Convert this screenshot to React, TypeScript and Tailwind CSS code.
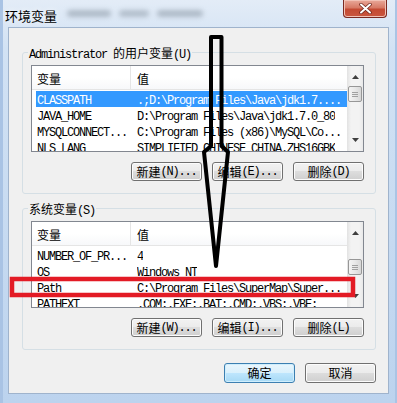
import React from 'react';

/** 一行环境变量 */
type Row = { name: string; value: string; selected?: boolean };

const userRows: Row[] = [
  { name: 'CLASSPATH', value: '.;D:\\Program Files\\Java\\jdk1.7....', selected: true },
  { name: 'JAVA_HOME', value: 'D:\\Program Files\\Java\\jdk1.7.0_80' },
  { name: 'MYSQLCONNECT...', value: 'C:\\Program Files (x86)\\MySQL\\Co...' },
  { name: 'NLS_LANG', value: 'SIMPLIFIED CHINESE_CHINA.ZHS16GBK' },
];

const sysRows: Row[] = [
  { name: 'NUMBER_OF_PR...', value: '4' },
  { name: 'OS', value: 'Windows NT' },
  { name: 'Path', value: 'C:\\Program Files\\SuperMap\\Super...' },
  { name: 'PATHEXT', value: '.COM;.EXE;.BAT;.CMD;.VBS;.VBE;' },
];

/** 宋体风格：ASCII 半角 6px，中文 12px */
function Txt({ s }: { s: string }) {
  const parts = s.split(/([^\x00-\x7f]+)/).filter(Boolean);
  return (
    <>
      {parts.map((p, i) =>
        /[^\x00-\x7f]/.test(p) ? (
          <span key={i} className="font-['Noto_Sans_CJK_SC',sans-serif] text-[12px] tracking-normal">
            {p}
          </span>
        ) : (
          <span key={i} className="font-['Liberation_Mono',monospace] text-[12px] tracking-[-1.2px]">
            {p}
          </span>
        ),
      )}
    </>
  );
}

function Tri({ up }: { up?: boolean }) {
  return (
    <svg width="7" height="4" viewBox="0 0 7 4">
      <polygon points={up ? '0,4 3.5,0 7,4' : '0,0 3.5,4 7,0'} fill="#3f3f3f" />
    </svg>
  );
}

function ScrollBar({ thumbGap }: { thumbGap: number }) {
  return (
    <div className="w-[16px] h-full flex flex-col bg-[linear-gradient(90deg,#e2e2e2,#f3f3f3_25%,#f3f3f3_75%,#e9e9e9)]">
      <div className="h-[19px] pt-[3px] flex items-center justify-center">
        <Tri up />
      </div>
      <div
        className="ml-[1px] w-[14px] h-[16px] rounded-[2px] border border-[#979797] bg-[linear-gradient(90deg,#f4f4f4,#e8e8e8_50%,#d7d7d7)] flex flex-col items-center justify-center gap-[1px]"
        style={{ marginTop: thumbGap }}
      >
        <div className="w-[6px] h-[1px] bg-[#a0a0a0]" />
        <div className="w-[6px] h-[1px] bg-[#a0a0a0]" />
        <div className="w-[6px] h-[1px] bg-[#a0a0a0]" />
      </div>
      <div className="flex-1" />
      <div className="h-[19px] pb-[3px] flex items-center justify-center">
        <Tri />
      </div>
    </div>
  );
}

function ListView({ rows, thumbGap }: { rows: Row[]; thumbGap: number }) {
  return (
    <div className="w-[333px] h-[87px] border border-[#828790] bg-white flex overflow-hidden">
      <div className="flex-1 flex flex-col overflow-hidden">
        <div className="h-[24px] shrink-0 flex border-b border-[#e5e5e5] bg-[linear-gradient(#ffffff,#ffffff_50%,#f7f8fa)] leading-[14px] text-black">
          <div className="w-[99px] pl-[5px] pt-[2px] flex items-center border-r border-[#e5e5e5]">
            <Txt s="变量" />
          </div>
          <div className="pl-[6px] pt-[2px] flex items-center">
            <Txt s="值" />
          </div>
        </div>
        <div className="pt-[1px]">
          {rows.map((r) => (
            <div
              key={r.name}
              className={
                r.selected
                  ? 'ml-[4px] pl-[1px] h-[16px] flex items-center whitespace-nowrap leading-[14px] bg-[#3399ff] text-white'
                  : 'ml-[4px] pl-[1px] h-[16px] flex items-center whitespace-nowrap leading-[14px] text-black'
              }
            >
              <div className="w-[100px] shrink-0 overflow-hidden">
                <Txt s={r.name} />
              </div>
              <div className="overflow-hidden">
                <Txt s={r.value} />
              </div>
            </div>
          ))}
        </div>
      </div>
      <ScrollBar thumbGap={thumbGap} />
    </div>
  );
}

function Btn({ label, h = 'h-[19px]', primary }: { label: string; h?: string; primary?: boolean }) {
  return (
    <div
      className={
        (primary
          ? 'border-[#3c7fb1] bg-[linear-gradient(#eaf6fd_0%,#d9f0fc_50%,#bee6fd_50%,#a7d9f5_100%)] shadow-[inset_0_0_0_1px_#cfeefd] '
          : 'border-[#707070] bg-[linear-gradient(#f2f2f2_0%,#ebebeb_50%,#dddddd_50%,#cfcfcf_100%)] shadow-[inset_0_0_0_1px_#fcfcfc] ') +
        h +
        ' w-[71px] border rounded-[3px] flex items-center justify-center leading-[14px] text-black whitespace-nowrap'
      }
    >
      <Txt s={label} />
    </div>
  );
}

function Group({
  label,
  rows,
  thumbGap,
  buttons,
  className,
}: {
  label: string;
  rows: Row[];
  thumbGap: number;
  buttons: string[];
  className?: string;
}) {
  return (
    <div
      className={
        'relative w-[354px] h-[142px] border border-[#d5dfe5] rounded-[3px] pt-[12px] pl-[8px] flex flex-col ' +
        (className ?? '')
      }
    >
      <div className="absolute left-[5px] top-[-8px] px-[1px] bg-[#f0f0f0] leading-[14px] text-black whitespace-nowrap">
        <Txt s={label} />
      </div>
      <ListView rows={rows} thumbGap={thumbGap} />
      <div className="mt-[10px] pr-[11px] flex justify-end gap-[10px]">
        {buttons.map((b) => (
          <Btn key={b} label={b} />
        ))}
      </div>
    </div>
  );
}

export default function App() {
  return (
    <div className="relative w-[397px] h-[403px] overflow-hidden flex flex-col bg-[linear-gradient(180deg,#e3ecf7_0%,#d2e2f4_12%,#c6daf1_60%,#bcd3ee_100%)] shadow-[inset_3px_0_0_#a9c3e4,inset_-2px_0_0_#aac4e4]">
      {/* 标题栏 */}
      <div className="h-[27px] shrink-0 flex items-start">
        <div className="pl-[5px] pt-[8px] leading-[16px] text-[13px] text-black font-['Noto_Sans_CJK_SC',sans-serif] [text-shadow:0_0_6px_#ffffff]">
          环境变量
        </div>
        <div className="ml-[10px] mt-[10px] flex gap-[8px] blur-[2.5px] opacity-50">
          <div className="w-[44px] h-[7px] rounded-full bg-[#7f8c99]" />
          <div className="w-[30px] h-[7px] rounded-full bg-[#8794a1]" />
          <div className="w-[46px] h-[7px] rounded-full bg-[#7f8c99]" />
        </div>
        <div className="ml-auto mr-[10px] w-[44px] h-[18px] rounded-b-[4px] border border-t-0 border-[#7a2a22] bg-[linear-gradient(#e9a99a_0%,#d77a66_45%,#c44a33_55%,#c9573f_100%)] shadow-[inset_0_0_0_1px_#f2c2b6] flex items-center justify-center">
          <svg width="13" height="11" viewBox="0 0 13 11">
            <path d="M2 1.5 L11 9.5 M11 1.5 L2 9.5" stroke="#6b241b" strokeWidth="3.4" strokeLinecap="round" />
            <path d="M2 1.5 L11 9.5 M11 1.5 L2 9.5" stroke="#ffffff" strokeWidth="2" strokeLinecap="round" />
          </svg>
        </div>
      </div>

      {/* 客户区 */}
      <div className="ml-[8px] w-[381px] h-[367px] shrink-0 border border-[#9fb3cc] bg-[#f0f0f0] pl-[13px] pt-[24px] flex flex-col">
        <Group
          label="Administrator 的用户变量(U)"
          rows={userRows}
          thumbGap={1}
          buttons={['新建(N)...', '编辑(E)...', '删除(D)']}
        />
        <Group
          label="系统变量(S)"
          rows={sysRows}
          thumbGap={18}
          buttons={['新建(W)...', '编辑(I)...', '删除(L)']}
          className="mt-[14px]"
        />
        <div className="mt-[13px] pr-[12px] flex justify-end gap-[10px]">
          <Btn label="确定" h="h-[20px]" primary />
          <Btn label="取消" h="h-[20px]" />
        </div>
      </div>

      {/* 标注：箭头与红框 */}
      <svg className="absolute left-0 top-0 pointer-events-none" width="397" height="403" viewBox="0 0 397 403">
        <polygon
          points="211,37 221.5,37 221.5,146 228,152 216,266 204,152 211,146"
          fill="none"
          stroke="#000000"
          strokeWidth="4"
          strokeLinejoin="round"
        />
        <rect x="12" y="279" width="341" height="16" fill="none" stroke="#e31b25" strokeWidth="4.5" />
      </svg>
    </div>
  );
}
